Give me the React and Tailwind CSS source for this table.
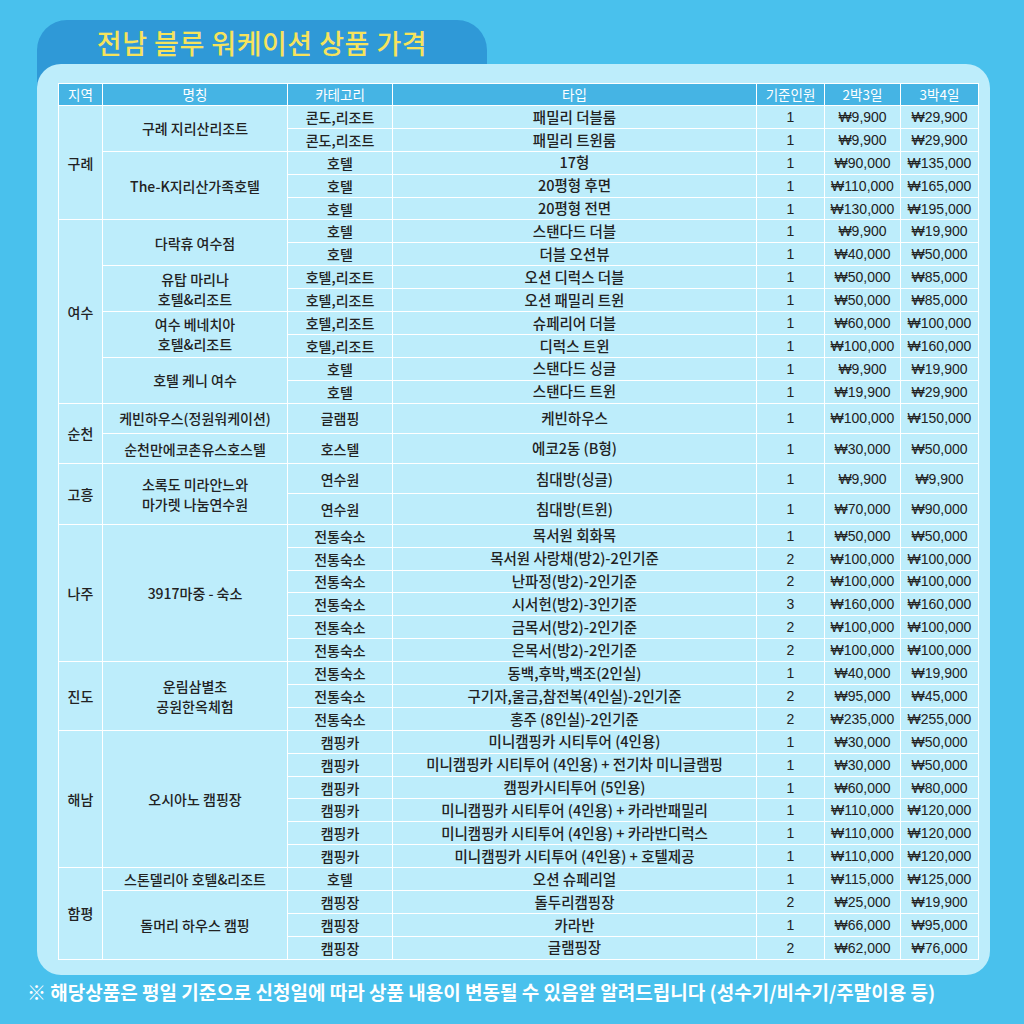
import React from 'react';

// 지역 > 숙소 > 객실 순서로 묶은 가격표 데이터
const regions = [
  {
    name: '구례',
    places: [
      {
        name: ['구례 지리산리조트'],
        rooms: [
          ['콘도,리조트', '패밀리 더블룸', '1', '₩9,900', '₩29,900'],
          ['콘도,리조트', '패밀리 트윈룸', '1', '₩9,900', '₩29,900'],
        ],
      },
      {
        name: ['The-K지리산가족호텔'],
        rooms: [
          ['호텔', '17형', '1', '₩90,000', '₩135,000'],
          ['호텔', '20평형 후면', '1', '₩110,000', '₩165,000'],
          ['호텔', '20평형 전면', '1', '₩130,000', '₩195,000'],
        ],
      },
    ],
  },
  {
    name: '여수',
    places: [
      {
        name: ['다락휴 여수점'],
        rooms: [
          ['호텔', '스탠다드 더블', '1', '₩9,900', '₩19,900'],
          ['호텔', '더블 오션뷰', '1', '₩40,000', '₩50,000'],
        ],
      },
      {
        name: ['유탑 마리나', '호텔&리조트'],
        rooms: [
          ['호텔,리조트', '오션 디럭스 더블', '1', '₩50,000', '₩85,000'],
          ['호텔,리조트', '오션 패밀리 트윈', '1', '₩50,000', '₩85,000'],
        ],
      },
      {
        name: ['여수 베네치아', '호텔&리조트'],
        rooms: [
          ['호텔,리조트', '슈페리어 더블', '1', '₩60,000', '₩100,000'],
          ['호텔,리조트', '디럭스 트윈', '1', '₩100,000', '₩160,000'],
        ],
      },
      {
        name: ['호텔 케니 여수'],
        rooms: [
          ['호텔', '스탠다드 싱글', '1', '₩9,900', '₩19,900'],
          ['호텔', '스탠다드 트윈', '1', '₩19,900', '₩29,900'],
        ],
      },
    ],
  },
  {
    name: '순천',
    tall: true,
    places: [
      {
        name: ['케빈하우스(정원워케이션)'],
        rooms: [['글램핑', '케빈하우스', '1', '₩100,000', '₩150,000']],
      },
      {
        name: ['순천만에코촌유스호스텔'],
        rooms: [['호스텔', '에코2동 (B형)', '1', '₩30,000', '₩50,000']],
      },
    ],
  },
  {
    name: '고흥',
    tall: true,
    places: [
      {
        name: ['소록도 미라안느와', '마가렛 나눔연수원'],
        rooms: [
          ['연수원', '침대방(싱글)', '1', '₩9,900', '₩9,900'],
          ['연수원', '침대방(트윈)', '1', '₩70,000', '₩90,000'],
        ],
      },
    ],
  },
  {
    name: '나주',
    places: [
      {
        name: ['3917마중 - 숙소'],
        rooms: [
          ['전통숙소', '목서원 회화목', '1', '₩50,000', '₩50,000'],
          ['전통숙소', '목서원 사랑채(방2)-2인기준', '2', '₩100,000', '₩100,000'],
          ['전통숙소', '난파정(방2)-2인기준', '2', '₩100,000', '₩100,000'],
          ['전통숙소', '시서헌(방2)-3인기준', '3', '₩160,000', '₩160,000'],
          ['전통숙소', '금목서(방2)-2인기준', '2', '₩100,000', '₩100,000'],
          ['전통숙소', '은목서(방2)-2인기준', '2', '₩100,000', '₩100,000'],
        ],
      },
    ],
  },
  {
    name: '진도',
    places: [
      {
        name: ['운림삼별초', '공원한옥체험'],
        rooms: [
          ['전통숙소', '동백,후박,백조(2인실)', '1', '₩40,000', '₩19,900'],
          ['전통숙소', '구기자,울금,참전복(4인실)-2인기준', '2', '₩95,000', '₩45,000'],
          ['전통숙소', '홍주 (8인실)-2인기준', '2', '₩235,000', '₩255,000'],
        ],
      },
    ],
  },
  {
    name: '해남',
    places: [
      {
        name: ['오시아노 캠핑장'],
        rooms: [
          ['캠핑카', '미니캠핑카 시티투어 (4인용)', '1', '₩30,000', '₩50,000'],
          ['캠핑카', '미니캠핑카 시티투어 (4인용) + 전기차 미니글램핑', '1', '₩30,000', '₩50,000'],
          ['캠핑카', '캠핑카시티투어 (5인용)', '1', '₩60,000', '₩80,000'],
          ['캠핑카', '미니캠핑카 시티투어 (4인용) + 카라반패밀리', '1', '₩110,000', '₩120,000'],
          ['캠핑카', '미니캠핑카 시티투어 (4인용) + 카라반디럭스', '1', '₩110,000', '₩120,000'],
          ['캠핑카', '미니캠핑카 시티투어 (4인용) + 호텔제공', '1', '₩110,000', '₩120,000'],
        ],
      },
    ],
  },
  {
    name: '함평',
    places: [
      {
        name: ['스톤델리아 호텔&리조트'],
        rooms: [['호텔', '오션 슈페리얼', '1', '₩115,000', '₩125,000']],
      },
      {
        name: ['돌머리 하우스 캠핑'],
        rooms: [
          ['캠핑장', '돌두리캠핑장', '2', '₩25,000', '₩19,900'],
          ['캠핑장', '카라반', '1', '₩66,000', '₩95,000'],
          ['캠핑장', '글램핑장', '2', '₩62,000', '₩76,000'],
        ],
      },
    ],
  },
];

const headers = ['지역', '명칭', '카테고리', '타입', '기준인원', '2박3일', '3박4일'];
const widths = ['w-[44px]', 'w-[185px]', 'w-[105px]', 'w-[364px]', 'w-[68px]', 'w-[76px]', 'w-[78px]'];

const cell = 'border-[1.5px] border-white text-center align-middle p-0 leading-none';
const numCell = `${cell} text-[14px] font-['Liberation_Sans',Arial,sans-serif]`;

const PriceTable = () => {
  const rows = [];
  regions.forEach((region) => {
    const regionSpan = region.places.reduce((n, p) => n + p.rooms.length, 0);
    region.places.forEach((place, pi) => {
      place.rooms.forEach((room, ri) => {
        rows.push(
          <tr key={`${region.name}-${pi}-${ri}`} className={region.tall ? 'h-[30.3px]' : 'h-[22.9px]'}>
            {pi === 0 && ri === 0 && (
              <td rowSpan={regionSpan} className={`${cell} text-[14px] font-medium`}>
                {region.name}
              </td>
            )}
            {ri === 0 && (
              <td rowSpan={place.rooms.length} className={`${cell} text-[14px] font-medium`}>
                <div className="leading-[20px]">
                  {place.name.map((line) => (
                    <div key={line}>{line}</div>
                  ))}
                </div>
              </td>
            )}
            <td className={`${cell} text-[14px] font-medium`}>{room[0]}</td>
            <td className={`${cell} text-[14.5px] font-medium`}>{room[1]}</td>
            <td className={numCell}>{room[2]}</td>
            <td className={numCell}>{room[3]}</td>
            <td className={numCell}>{room[4]}</td>
          </tr>
        );
      });
    });
  });

  return (
    <table className="w-[920px] table-fixed border-collapse text-[#222]">
      <thead>
        <tr className="h-[22px] bg-[#45b4e4]">
          {headers.map((h, i) => (
            <th key={h} className={`${cell} ${widths[i]} text-[13.5px] font-normal text-white`}>
              {h}
            </th>
          ))}
        </tr>
      </thead>
      <tbody>{rows}</tbody>
    </table>
  );
};

export default function App() {
  return (
    <div className="w-[1024px] h-[1024px] bg-[#49c1ed] flex flex-col overflow-hidden font-['Noto_Sans_CJK_KR','Noto_Sans',sans-serif]">
      <div className="ml-[37px] mt-[20px] w-[450px] h-[66px] bg-[#2f99d7] rounded-t-[30px] flex justify-center pt-[6px]">
        <h1 className="text-[27px] font-medium text-[#f6e35c] leading-[34px] tracking-[0.5px]">
          전남 블루 워케이션 상품 가격
        </h1>
      </div>
      <div className="relative -mt-[22px] ml-[37px] w-[953px] h-[911px] bg-[#bdedfb] rounded-[24px] pl-[21px] pt-[19px]">
        <PriceTable />
      </div>
      <p className="ml-[27px] mt-[3px] text-[19px] font-bold text-white leading-[28px]">
        ※ 해당상품은 평일 기준으로 신청일에 따라 상품 내용이 변동될 수 있음알 알려드립니다 (성수기/비수기/주말이용 등)
      </p>
    </div>
  );
}
